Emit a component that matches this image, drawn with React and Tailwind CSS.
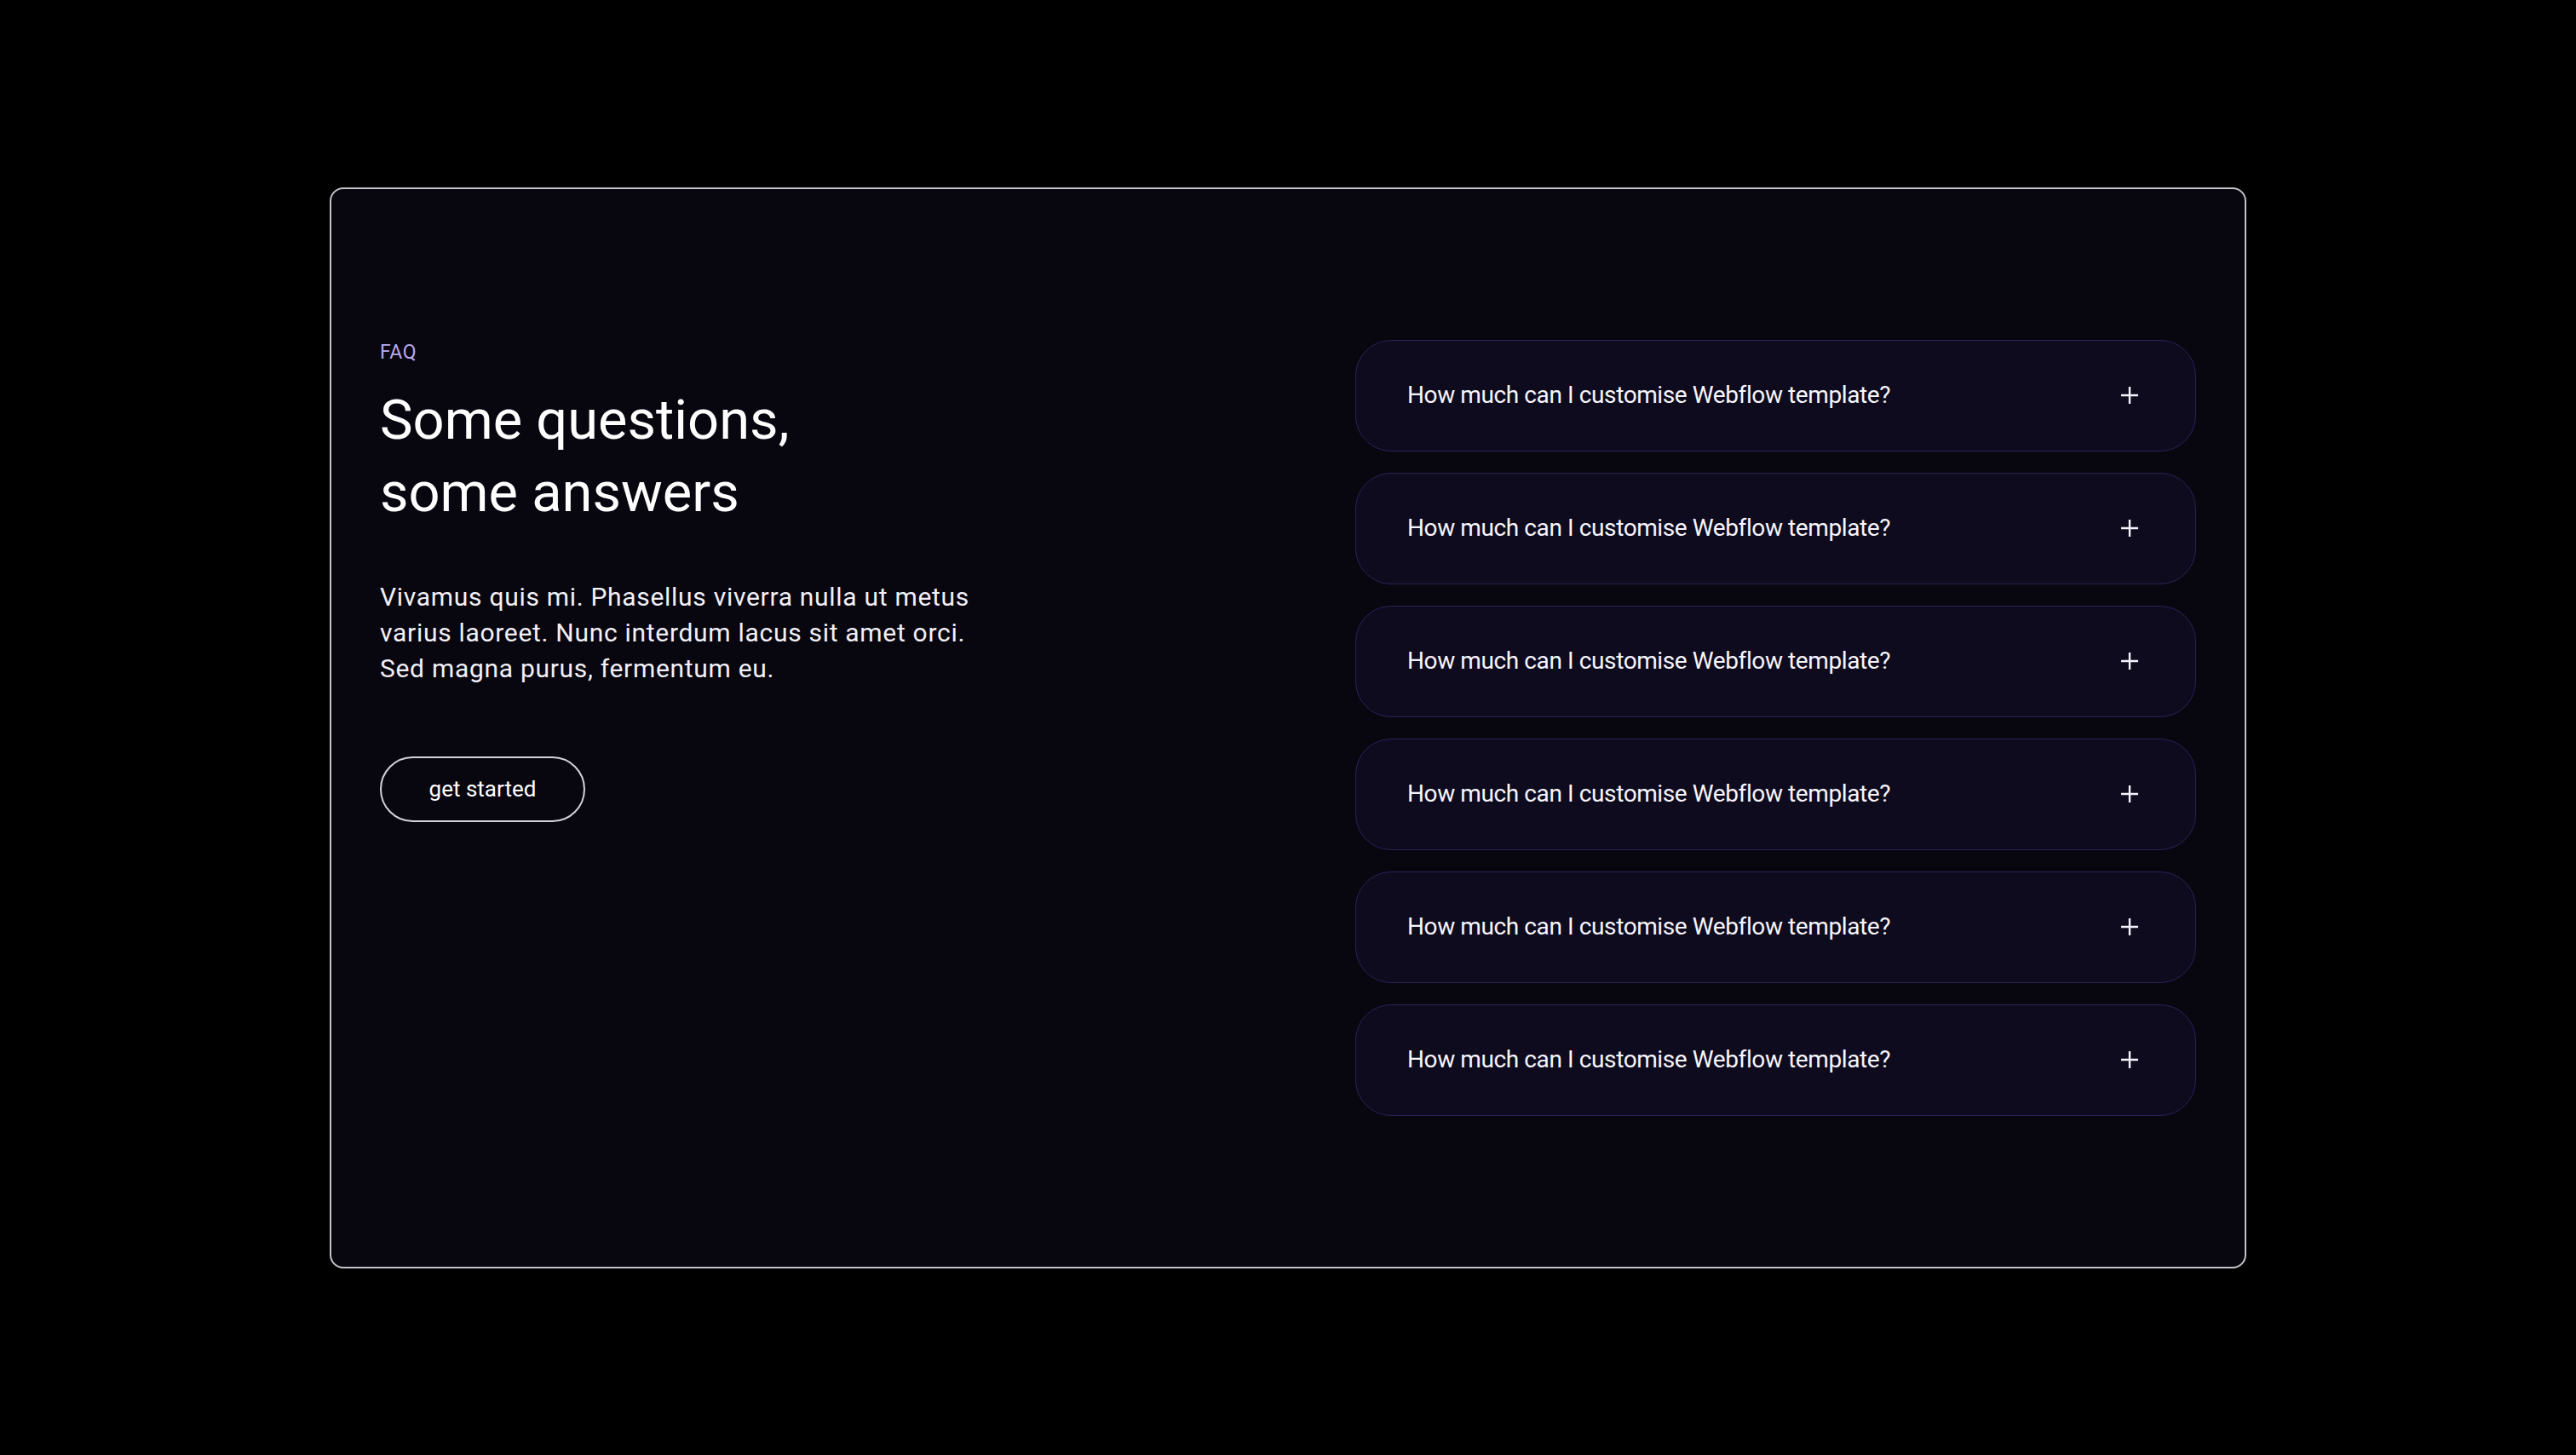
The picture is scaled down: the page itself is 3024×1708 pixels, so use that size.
const questions = Array.from({ length: 6 }, () => "How much can I customise Webflow template?");

const PlusIcon = () => (
  <svg width="22" height="22" viewBox="0 0 22 22" fill="none" className="shrink-0">
    <path d="M11 1v20M1 11h20" stroke="#f5f3ff" strokeWidth="2.4" />
  </svg>
);

const FaqItem = ({ text }) => (
  <div className="flex h-[131px] items-center justify-between rounded-[42px] border-[1.5px] border-[#2a2358] bg-[#0e0b1e] pl-[60px] pr-[66px]">
    <span className="text-[28px] leading-none tracking-[-0.4px] text-[#f7f5fb]">{text}</span>
    <PlusIcon />
  </div>
);

export default function App() {
  return (
    <div
      className="flex h-[1708px] w-full items-center justify-center bg-black"
      style={{ fontFamily: "Roboto, 'Liberation Sans', sans-serif" }}
    >
      <div className="flex w-[2250px] items-start justify-between rounded-[16px] border-2 border-[#c4c4c8] bg-[#08060f] px-[57px] py-[177px]">
        <div className="flex flex-col items-start">
          <p className="text-[23px] leading-[30px] tracking-[0.5px] text-[#b9a8ef]">FAQ</p>
          <h2 className="mt-[22px] text-[65px] leading-[85px] font-normal text-white">
            Some questions,
            <br />
            some answers
          </h2>
          <p className="mt-[59px] text-[30px] leading-[42px] tracking-[0.7px] text-[#f2f0f7]">
            Vivamus quis mi. Phasellus viverra nulla ut metus
            <br />
            varius laoreet. Nunc interdum lacus sit amet orci.
            <br />
            Sed magna purus, fermentum eu.
          </p>
          <button
            type="button"
            className="mt-[82px] flex h-[77px] w-[241px] items-center justify-center rounded-full border-2 border-[#d4d4d8] text-[26px] text-white"
          >
            get started
          </button>
        </div>

        <div className="flex w-[987px] flex-col gap-[25px]">
          {questions.map((q, i) => (
            <FaqItem key={i} text={q} />
          ))}
        </div>
      </div>
    </div>
  );
}
